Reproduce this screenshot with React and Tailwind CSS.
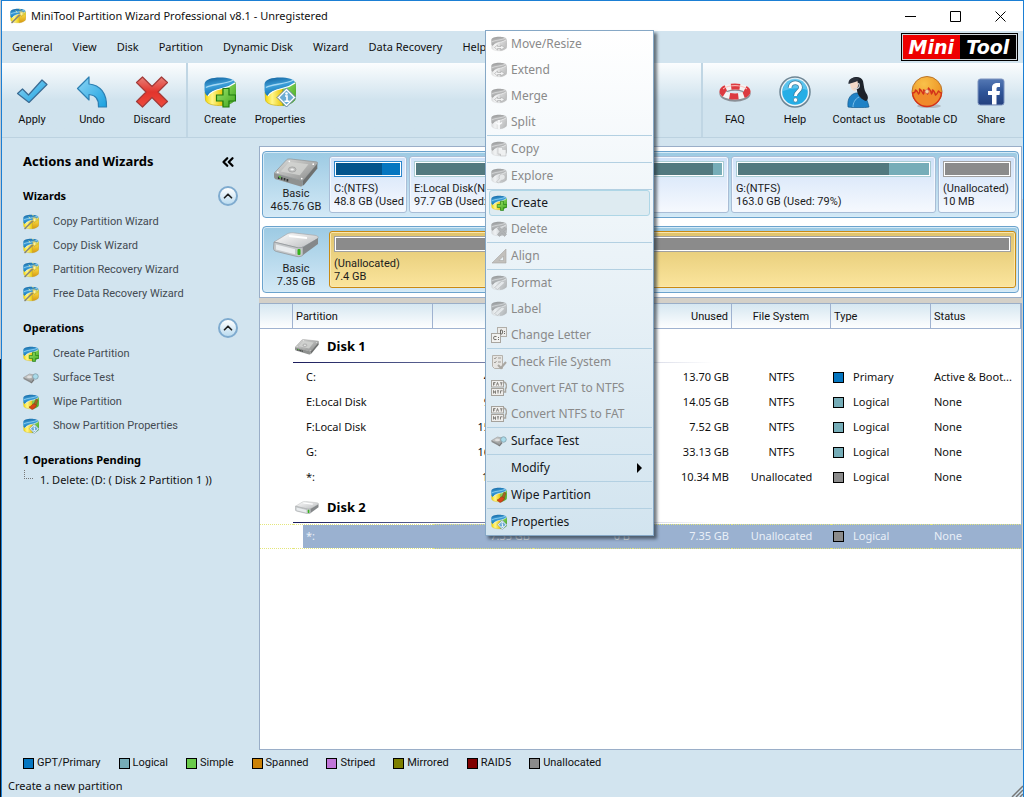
import React, { useState } from 'react';
import { ChevronUp, ChevronsLeft } from 'lucide-react';

const menuBar = ['General', 'View', 'Disk', 'Partition', 'Dynamic Disk', 'Wizard', 'Data Recovery', 'Help'];

const legend = [
  { label: 'GPT/Primary', color: 'bg-[#0576c0]' },
  { label: 'Logical', color: 'bg-[#76adb8]' },
  { label: 'Simple', color: 'bg-[#6acb4b]' },
  { label: 'Spanned', color: 'bg-[#cc8206]' },
  { label: 'Striped', color: 'bg-[#c075d8]' },
  { label: 'Mirrored', color: 'bg-[#7c7f00]' },
  { label: 'RAID5', color: 'bg-[#800000]' },
  { label: 'Unallocated', color: 'bg-[#8b8b8b]' },
];

const diskOneRows = [
  { name: 'C:', capacity: '48.83 GB', used: '35.13 GB', unused: '13.70 GB', fs: 'NTFS', type: 'Primary', color: 'bg-[#0576c0]', status: 'Active & Boot...' },
  { name: 'E:Local Disk', capacity: '97.66 GB', used: '83.61 GB', unused: '14.05 GB', fs: 'NTFS', type: 'Logical', color: 'bg-[#76adb8]', status: 'None' },
  { name: 'F:Local Disk', capacity: '156.25 GB', used: '148.73 GB', unused: '7.52 GB', fs: 'NTFS', type: 'Logical', color: 'bg-[#76adb8]', status: 'None' },
  { name: 'G:', capacity: '163.01 GB', used: '129.88 GB', unused: '33.13 GB', fs: 'NTFS', type: 'Logical', color: 'bg-[#76adb8]', status: 'None' },
  { name: '*:', capacity: '10.34 MB', used: '0 B', unused: '10.34 MB', fs: 'Unallocated', type: 'Logical', color: 'bg-[#8b8b8b]', status: 'None' },
];

const contextMenu = [
  [
    { label: 'Move/Resize', icon: 'resize', disabled: true },
    { label: 'Extend', icon: 'resize', disabled: true },
    { label: 'Merge', icon: 'resize', disabled: true },
    { label: 'Split', icon: 'split', disabled: true },
  ],
  [{ label: 'Copy', icon: 'copy', disabled: true }],
  [{ label: 'Explore', icon: 'explore', disabled: true }],
  [
    { label: 'Create', icon: 'plus', active: true },
    { label: 'Delete', icon: 'cross', disabled: true },
  ],
  [{ label: 'Align', icon: 'align', disabled: true }],
  [
    { label: 'Format', icon: 'format', disabled: true },
    { label: 'Label', icon: 'label', disabled: true },
    { label: 'Change Letter', icon: 'letter', disabled: true },
  ],
  [
    { label: 'Check File System', icon: 'check', disabled: true },
    { label: 'Convert FAT to NTFS', icon: 'convert', disabled: true },
    { label: 'Convert NTFS to FAT', icon: 'convert', disabled: true },
  ],
  [{ label: 'Surface Test', icon: 'surface' }],
  [{ label: 'Modify', submenu: true }],
  [{ label: 'Wipe Partition', icon: 'wipe' }],
  [{ label: 'Properties', icon: 'info' }],
];

// gradients shared by every icon on the page
const IconDefs = () => (
  <svg width="0" height="0" className="absolute" aria-hidden="true">
    <defs>
      <linearGradient id="gBlue" x1="0" y1="0" x2="0.3" y2="1">
        <stop offset="0" stopColor="#0f5f9c" />
        <stop offset="0.5" stopColor="#3d9fd8" />
        <stop offset="1" stopColor="#0b6fb5" />
      </linearGradient>
      <linearGradient id="gYellow" x1="0" y1="0" x2="1" y2="0">
        <stop offset="0" stopColor="#f3d500" />
        <stop offset="0.4" stopColor="#fff68a" />
        <stop offset="1" stopColor="#e8c400" />
      </linearGradient>
      <linearGradient id="gGold" x1="0" y1="0" x2="0" y2="1">
        <stop offset="0" stopColor="#b9cf3c" />
        <stop offset="0.4" stopColor="#f3cf3a" />
        <stop offset="1" stopColor="#d79a10" />
      </linearGradient>
      <linearGradient id="gGreen" x1="0" y1="0" x2="1" y2="1">
        <stop offset="0" stopColor="#9be36a" />
        <stop offset="1" stopColor="#3fa51c" />
      </linearGradient>
      <linearGradient id="gSky" x1="0" y1="0" x2="1" y2="1">
        <stop offset="0" stopColor="#8fd6f5" />
        <stop offset="1" stopColor="#18a0df" />
      </linearGradient>
      <linearGradient id="gRed" x1="0" y1="0" x2="0" y2="1">
        <stop offset="0" stopColor="#e88078" />
        <stop offset="0.5" stopColor="#e2342c" />
        <stop offset="1" stopColor="#ee4a3c" />
      </linearGradient>
      <linearGradient id="gMetal" x1="0" y1="0" x2="1" y2="1">
        <stop offset="0" stopColor="#dcdcda" />
        <stop offset="0.5" stopColor="#b4b5b4" />
        <stop offset="1" stopColor="#8b8c8b" />
      </linearGradient>
      <linearGradient id="gSilver" x1="0" y1="0" x2="1" y2="1">
        <stop offset="0" stopColor="#ffffff" />
        <stop offset="1" stopColor="#b9bbbd" />
      </linearGradient>
      <radialGradient id="gFire" cx="0.4" cy="0.25" r="0.8">
        <stop offset="0" stopColor="#f9c14a" />
        <stop offset="1" stopColor="#ea8a1c" />
      </radialGradient>
      <linearGradient id="gFb" x1="0" y1="0" x2="0" y2="1">
        <stop offset="0" stopColor="#5478b4" />
        <stop offset="0.5" stopColor="#2f5598" />
        <stop offset="1" stopColor="#24407e" />
      </linearGradient>
    </defs>
  </svg>
);

const Badge = ({ kind }) => {
  if (kind === 'plus') {
    return <path d="M19 12.500h6v6.500h6.500v6H25V31h-6v-6h-6.500v-6H19z" fill="url(#gGreen)" stroke="#1f7a10" strokeWidth="1.200" />;
  }
  if (kind === 'cross') {
    return <path d="M13 15l4-3 5 5 5-5 4 4-5 5 5 6-4 4-5-6-5 6-4-4 5-6z" fill="#8a8a8a" stroke="#666" />;
  }
  if (kind === 'info') {
    return (
      <g>
        <path d="M22.500 12L32 21.500 22.500 31 13 21.500z" fill="#fff" stroke="#5b7f9b" strokeWidth="1" />
        <path d="M22.500 14.500L29.500 21.500 22.500 28.500 15.500 21.500z" fill="#6dacd4" />
        <path d="M21 20h2v5M20.500 25.300h5" stroke="#fff" strokeWidth="1.600" fill="none" />
        <circle cx="22.500" cy="17.500" r="1.300" fill="#fff" />
      </g>
    );
  }
  if (kind === 'wizard') {
    return (
      <g strokeLinecap="round">
        <path d="M4 29L23 10" stroke="#5d5a45" strokeWidth="3" />
        <path d="M4 29L23 10" stroke="#e8e8e8" strokeWidth="1.200" />
        <path d="M22 5l1.500 3.500 4-1-2 3.500 3 3-4-.5-1.500 4-1.500-4-4 .5 3-3-2-3.500 3 1z" fill="#fff6a0" stroke="#a58a10" strokeWidth="0.600" />
        <path d="M14 9l-2-3M20 3l-1-2" stroke="#fff9a0" strokeWidth="1.500" />
      </g>
    );
  }
  if (kind === 'wipe') {
    return (
      <g>
        <path d="M12 26c4-1 6-5 10-7l5 4c-2 4-5 7-9 8z" fill="#d8451a" stroke="#8c2508" />
        <path d="M22 19l4-9 4 2-3 10z" fill="#a46324" stroke="#6e3b10" strokeWidth="0.700" />
      </g>
    );
  }
  if (kind === 'copy') {
    return <path d="M14 13h9v4h7v13H19v-4h-5z" fill="#ececec" stroke="#888" />;
  }
  if (kind === 'explore') {
    return <path d="M11 28l6-7a6 6 0 1 1 4 3l-6 6z" fill="#ddd" stroke="#888" />;
  }
  if (kind === 'resize') {
    return <path d="M7 23l6-5v3h7v-3l7 5-7 5v-3h-7v3z" fill="#eee" stroke="#777" strokeWidth="1.300" />;
  }
  if (kind === 'split') {
    return <path d="M16 12v18M10 17l6 4 6-4" stroke="#fff" strokeWidth="3" fill="none" />;
  }
  if (kind === 'format' || kind === 'label') {
    return <path d="M7 25L22 12l6 3-15 14z" fill="#e2e2e2" stroke="#888" />;
  }
  return null;
};

// three-part partition disc: blue lid, yellow front, green side
const PartitionIcon = ({ size = 16, badge, className = '' }) => (
  <svg width={size} height={size} viewBox="0 0 32 32" className={className} aria-hidden="true">
    <path d="M1 16C6 12 12 11 19 10v19.500C10 30 2 28 1.500 24z" fill="url(#gYellow)" stroke="#c9a900" strokeWidth="0.600" />
    <path
      d="M19 10.500c5-1 9-3 12-4.500 1.300 4 1.300 14 0 18-2 3-7 5-12 5.500z"
      fill={badge === 'wizard' ? 'url(#gGold)' : 'url(#gGreen)'}
      stroke={badge === 'wizard' ? '#b98a10' : '#4a9a2a'}
      strokeWidth="0.600"
    />
    <path d="M0.500 8C1 3.500 8 1.500 16 1.500s14.500 1.500 15 5.500c-4 3-8 4.500-13 5.500C11 14 6 16 4 20 1.500 19.500.5 16 .5 13z" fill="url(#gBlue)" />
    <path d="M2 11.500C8 8 21 8.500 29.500 4" fill="none" stroke="#a4d8f4" strokeWidth="1.400" />
    <path d="M4 20C6 16 11 14 18 12.500c5-1 9-2.500 13-5.500" fill="none" stroke="#fff" strokeWidth="1.200" />
    <Badge kind={badge} />
  </svg>
);

const SurfaceIcon = ({ size = 16 }) => (
  <svg width={size} height={size} viewBox="0 0 32 32" aria-hidden="true">
    <path d="M1 15L13 8l15 3-12 11z" fill="url(#gMetal)" stroke="#8c8c8c" />
    <path d="M1 15l15 7v4L1 18z" fill="#8a8c8c" />
    <ellipse cx="13" cy="14" rx="5" ry="2.500" fill="#dedede" />
    <path d="M16 26l6-7" stroke="#777" strokeWidth="3" />
    <circle cx="25" cy="13" r="5.500" fill="#a9dbea" stroke="#7f9aa6" strokeWidth="1.500" />
  </svg>
);

const AlignIcon = () => (
  <svg width="16" height="16" viewBox="0 0 16 16" aria-hidden="true">
    <path d="M1 15L15 1v14zM8 12.500h4.500V8z" fill="#c2c0bc" stroke="#a8a6a2" strokeWidth="0.600" fillRule="evenodd" />
  </svg>
);

const LetterIcon = () => (
  <svg width="16" height="16" viewBox="0 0 16 16" aria-hidden="true">
    <rect x="6.500" y="0.500" width="9" height="9" fill="#ececea" stroke="#b1aea8" />
    <rect x="0.500" y="6.500" width="9" height="9" fill="#f2f2f0" stroke="#a9a6a0" />
    <path d="M9.500 3v4h1.500q1.500-2 0-4zM13.500 4v1M13.500 6v1M5.500 9.500q-3-1-3 1.500t3 1.500M7.500 10v1M7.500 12v1" fill="none" stroke="#6f6c67" />
  </svg>
);

const CheckIcon = () => (
  <svg width="16" height="16" viewBox="0 0 16 16" aria-hidden="true">
    <path d="M1.500 1.500h10v13h-8l-2-2z" fill="#e6e5e2" stroke="#b5b2ac" />
    <path d="M3 4l1 1 1.500-2M7 4h3M3 8l1 1 1.500-2M7 8h3" fill="none" stroke="#a09d97" />
    <path d="M7 11l3 3 5-6" fill="none" stroke="#aaa7a1" strokeWidth="2" />
  </svg>
);

const ConvertIcon = () => (
  <svg width="16" height="16" viewBox="0 0 16 16" aria-hidden="true">
    <rect x="0.500" y="0.500" width="12" height="6.500" fill="#efeeec" stroke="#a5a29c" />
    <rect x="0.500" y="8.500" width="12" height="7" fill="#efeeec" stroke="#a5a29c" />
    <path d="M2.500 5.500v-3h2M2.500 4h1.500M5.500 5.500l1-3 1 3M9 2.800h2.500M10.300 2.800v2.700M2.500 13.500v-3l2 3v-3M6 10.800h2M7 10.800v2.700M9.500 13.500v-2.700h2" fill="none" stroke="#77746f" strokeWidth="0.900" />
    <path d="M13 2c3 1 3 5 1.500 7v3h-2" fill="none" stroke="#aaa7a1" strokeWidth="1.500" />
  </svg>
);

const HardDrive = ({ className = '' }) => (
  <svg viewBox="0 0 46 30" className={className} aria-hidden="true">
    <path d="M0 16L13 2c1-1 2-1 4-1l27 3c2 .3 2 1.300 1 2.500L30 24z" fill="url(#gMetal)" stroke="#8f9090" strokeWidth="0.700" />
    <path d="M0 16l30 8v4.500c0 1-1 1.500-3 1L3 22.500C1 22 0 21 0 19.500z" fill="#8f9190" />
    <path d="M30 24L45.300 6v5L31.500 28c-1 1-1.500 1-1.500 0z" fill="#6e706f" />
    <path d="M7 14L16 4l20 2.500L27 18z" fill="#d3d4d2" opacity="0.800" />
    <ellipse cx="19" cy="12" rx="4" ry="2.700" fill="#bfc0bf" stroke="#9a9b9a" strokeWidth="0.700" />
    <ellipse cx="19" cy="12" rx="1.800" ry="1.100" fill="#f2f2f2" />
    <path d="M5 19.500v2.500M8 20.200v2.500M11 21v2.500M14 22v2.500" stroke="#2f3331" strokeWidth="1.800" />
    <path d="M5 18.500l2 .6v2l-2-.6z" fill="#57c53b" />
    <circle cx="16" cy="3.500" r="0.900" fill="#fff" />
    <circle cx="41" cy="6.500" r="0.900" fill="#fff" />
    <circle cx="4" cy="15" r="0.900" fill="#fff" />
    <circle cx="29" cy="21.500" r="0.900" fill="#fff" />
  </svg>
);

const RemovableDrive = ({ className = '' }) => (
  <svg viewBox="0 0 46 26" className={className} aria-hidden="true">
    <path d="M1 10L14 2c2-1 4-1.300 6-1.200l22 2.500c3 .5 4 2 2.500 3.500L30 15c-2 1-4 1-6 .6z" fill="url(#gSilver)" stroke="#a6a8aa" strokeWidth="0.700" />
    <path d="M1 10l23 5.600c2 .4 4 .4 6-.6v8c-1.500 1.500-4 2-6 1.500L3.500 19.500C1.500 19 .5 18 .5 16z" fill="#c5c8ca" stroke="#8e9193" strokeWidth="0.700" />
    <path d="M30 15L45 6v6L30 23z" fill="#85888a" />
    <path d="M3 12.500l19 4.800v5L3 17.500z" fill="#e9ecee" />
    <path d="M16 4l18 2" stroke="#fff" strokeWidth="2" />
    <rect x="24.500" y="17" width="3" height="6" rx="1" fill="#35b21a" />
  </svg>
);

const ApplyIcon = () => (
  <svg width="32" height="32" viewBox="0 0 32 32" aria-hidden="true">
    <path d="M1.500 17.500L6.500 13l6 6L26 4l5 4.500-18 18z" fill="url(#gSky)" stroke="#3a6b93" strokeWidth="1.200" strokeLinejoin="round" />
  </svg>
);

const UndoIcon = () => (
  <svg width="32" height="32" viewBox="0 0 32 32" aria-hidden="true">
    <path d="M1.500 12.500L13 1v7c11 1 18 9 17.500 23H22.500c.5-8-3-12-9.500-12.500V24z" fill="url(#gSky)" stroke="#2c7fb2" strokeWidth="1.200" strokeLinejoin="round" />
  </svg>
);

const DiscardIcon = () => (
  <svg width="34" height="32" viewBox="0 0 34 32" aria-hidden="true">
    <path d="M7.500 1L17 10.500 26.500 1 32.500 6.500 23 16l9.500 9.500-6 5.500L17 21.500 7.500 31l-6-5.500L11 16 1.500 6.500z" fill="url(#gRed)" stroke="#a23a38" strokeWidth="1.200" strokeLinejoin="round" />
  </svg>
);

const LifebuoyIcon = () => (
  <svg width="32" height="32" viewBox="0 0 32 32" aria-hidden="true">
    <ellipse cx="16" cy="17" rx="12.500" ry="5.500" fill="none" stroke="#8a8f96" strokeWidth="6.500" />
    <ellipse cx="16" cy="15.500" rx="12.500" ry="5" fill="none" stroke="#f3f3f3" strokeWidth="6" />
    <ellipse cx="16" cy="15.500" rx="12.500" ry="5" fill="none" stroke="#dc3a40" strokeWidth="6" strokeDasharray="8.500 5.500" strokeDashoffset="3" />
    <path d="M4 13c5-4.500 19-4.500 24 0" fill="none" stroke="#ffc4c0" strokeWidth="1" />
  </svg>
);

const HelpIcon = () => (
  <svg width="32" height="32" viewBox="0 0 32 32" aria-hidden="true">
    <circle cx="16" cy="16" r="15" fill="#eef5f9" stroke="#6d8594" strokeWidth="1.500" />
    <circle cx="16" cy="16" r="12.800" fill="#25aee6" />
    <path d="M4 15a12 12 0 0 1 24-1c-8-3-16-2-24 1z" fill="#7fd0f2" opacity="0.600" />
    <path d="M11 12c0-7 10.500-7 10.500-.5 0 4-5 4-5 8.500" fill="none" stroke="#3f7c9c" strokeWidth="4.500" />
    <path d="M11 12c0-7 10.500-7 10.500-.5 0 4-5 4-5 8.500" fill="none" stroke="#fff" strokeWidth="3" />
    <circle cx="16.500" cy="24" r="2.200" fill="#fff" stroke="#3f7c9c" strokeWidth="0.700" />
  </svg>
);

const ContactIcon = () => (
  <svg width="32" height="32" viewBox="0 0 32 32" aria-hidden="true">
    <path d="M5 31c-1-9 3-13 8-14 8-1 11 5 13 14-5 1-15 1-21 0z" fill="#1f82c6" stroke="#14598c" strokeWidth="0.700" />
    <path d="M10 31c0-4 2-8 6-10" fill="none" stroke="#7cc0ea" />
    <path d="M7 6C8 0 18-1 20 5c1 5 1 9 3 12 3 4 2 7 0 8-4-1-9-6-9-11z" fill="#1d222a" />
    <path d="M7 6c3 0 6-1 7-2 2 5 1 9-2 11-3-.5-5-3-5-9z" fill="#f3d9c8" />
    <path d="M5.500 8C5 2 12 0 16 3c-1 3-6 3.500-10.500 5z" fill="#2a2f38" />
    <path d="M15.500 7c2 4 0 6.500-5 5.500" fill="none" stroke="#cfd4d9" strokeWidth="1.200" />
  </svg>
);

const CdIcon = () => (
  <svg width="32" height="32" viewBox="0 0 32 32" aria-hidden="true">
    <ellipse cx="18" cy="30" rx="12" ry="2" fill="#9c9ca0" opacity="0.600" />
    <circle cx="16" cy="15.500" r="15" fill="url(#gFire)" stroke="#b9742a" strokeWidth="1" />
    <path
      d="M1.500 17c2 0 3-1 3-3 2 1 2 2 3 4 2-1 1-3 1-5 2 1 2.500 3 4 5 1-1 .5-2 0-4 3 1 3 2 4 4 1.500-2 0-4 1-6 2 2 3 4 3 6 1.500-1 1-3 1-4 2 1 2.500 3 3 5 2-1 2-3 3-4 1 1 1.500 2 3 2-1 8-7 13.500-14.500 13.500S2.500 25 1.500 17z"
      fill="#f08a2a"
      stroke="#d3321b"
      strokeWidth="1.400"
      strokeLinejoin="round"
    />
    <circle cx="16" cy="15.500" r="2" fill="#f6d7a0" stroke="#c66" strokeWidth="0.600" />
  </svg>
);

const FacebookIcon = () => (
  <svg width="32" height="32" viewBox="0 0 32 32" aria-hidden="true">
    <rect x="3" y="3" width="26" height="26" rx="2.500" fill="url(#gFb)" stroke="#7d93be" />
    <path d="M17 28.500V19h-4v-4h4v-3c0-4 2-5.500 8-5v4c-3-.2-3.500.3-3.500 2v2h3.500l-.5 4h-3v9.500z" fill="#fff" />
  </svg>
);

const ToolButton = ({ icon, label, wide }) => (
  <button type="button" className={`${wide ? 'w-[68px]' : 'w-[60px]'} flex flex-col items-center gap-1 pt-[13px] text-[11px] leading-4 text-[#111] whitespace-nowrap`}>
    <span className="flex h-8 items-center">{icon}</span>
    {label}
  </button>
);

const SideSection = ({ title, items }) => {
  const [open, setOpen] = useState(true);
  return (
    <section>
      <div className="flex h-6 items-center justify-between pr-[21px]">
        <h3 className="font-['Noto_Sans',sans-serif] text-[11px] font-bold text-black">{title}</h3>
        <button
          type="button"
          aria-label={`Toggle ${title}`}
          onClick={() => setOpen(!open)}
          className="flex size-5 items-center justify-center rounded-full border-2 border-[#7fabcf] bg-linear-to-b from-white to-[#bcdcf0] text-[#222]"
        >
          <ChevronUp size={14} strokeWidth={3} />
        </button>
      </div>
      {open && (
        <ul className="pt-[2px]">
          {items.map((item) => (
            <li key={item.label}>
              <a href="#" className="flex h-6 items-center gap-[14px] text-[11px] text-[#444b52]">
                {item.icon}
                {item.label}
              </a>
            </li>
          ))}
        </ul>
      )}
    </section>
  );
};

const UsageBar = ({ frame, fill, used, usedFill }) => (
  <div className={`h-4 border p-px ${frame}`}>
    <div className={`h-full ${fill}`}>
      <div className={`h-full ${usedFill}`} style={{ width: `${used}%` }} />
    </div>
  </div>
);

const PartitionBlock = ({ name, size, width, selected, ...bar }) => (
  <div
    className={`min-w-0 rounded-[3px] border px-1 pt-1 text-[11px] leading-[13px] whitespace-nowrap text-[#1c1c1c] ${width} ${
      selected
        ? 'border-[#c98a12] bg-linear-to-b from-[#e0c46c] to-[#fbe59d] shadow-[inset_0_0_0_1px_#fbe8b0]'
        : 'border-[#a9bdd6] bg-linear-to-b from-[#cfe1f8] to-[#f6f9fe] shadow-[inset_0_0_0_1px_#f4f8fe]'
    }`}
  >
    <UsageBar {...bar} />
    <div className="-mr-[3px] overflow-hidden pt-[5px]">
      <div>{name}</div>
      <div>{size}</div>
    </div>
  </div>
);

const DiskStrip = ({ icon, size, children }) => (
  <div className="flex h-[67px] rounded-[4px] border border-[#6ba3cd] bg-linear-to-b from-[#9ccae3] to-[#d3e9f6] py-1 pr-[2px] shadow-[inset_0_0_0_1px_#d7ebf7]">
    <div className="flex w-[66px] shrink-0 flex-col items-center justify-end text-[11px] leading-[13px] text-[#1c1c1c]">
      {icon}
      <span>Basic</span>
      <span>{size}</span>
    </div>
    <div className="flex min-w-0 flex-1 gap-[2px]">{children}</div>
  </div>
);

const logicalBar = { frame: 'border-[#a9cdd4] bg-white', fill: 'bg-[#76adb8]', usedFill: 'bg-[#52797f]' };
const emptyBar = { frame: 'border-[#a0a0a0] bg-white', fill: 'bg-[#8b8b8b]', usedFill: 'bg-[#8b8b8b]', used: 100 };

const DiskMap = () => (
  <div className="flex flex-col gap-2 border border-[#9aaec8] bg-white px-[2px] pt-1 pb-1">
    <DiskStrip icon={<HardDrive className="w-11" />} size="465.76 GB">
      <PartitionBlock name="C:(NTFS)" size="48.8 GB (Used" width="w-[78px] shrink-0" frame="border-[#2b86cb] bg-white" fill="bg-[#0576c0]" usedFill="bg-[#03548b]" used={72} />
      <PartitionBlock name="E:Local Disk(NTFS)" size="97.7 GB (Used: 85%)" width="flex-121" used={86} {...logicalBar} />
      <PartitionBlock name="F:Local Disk(NTFS)" size="156.2 GB (Used: 95%)" width="flex-195" used={95} {...logicalBar} />
      <PartitionBlock name="G:(NTFS)" size="163.0 GB (Used: 79%)" width="flex-207" used={79} {...logicalBar} />
      <PartitionBlock name="(Unallocated)" size="10 MB" width="w-[78px] shrink-0" {...emptyBar} />
    </DiskStrip>
    <DiskStrip icon={<RemovableDrive className="mb-1 w-[46px]" />} size="7.35 GB">
      <PartitionBlock name="(Unallocated)" size="7.4 GB" width="flex-1" selected {...emptyBar} />
    </DiskStrip>
  </div>
);

const DiskHeadingRow = ({ icon, name, height }) => (
  <tr>
    <td />
    <th colSpan={7} scope="rowgroup" className="p-0 text-left align-top">
      <div className={`flex items-center gap-2 pt-[3px] pl-[2px] text-[13px] font-bold text-black ${height}`}>
        {icon}
        {name}
      </div>
      <div className="h-px w-[420px] bg-linear-to-r from-[#1c1c5c] to-white" />
    </th>
  </tr>
);

const PartitionRow = ({ row, selected }) => {
  const edge = selected ? 'border-y border-dotted border-[#e4e67c]' : '';
  const cell = selected ? `${edge} bg-[#9ab1d0] text-[#e9eff7]` : 'text-[#111]';
  return (
    <tr className="h-[25px]">
      <td className={edge} />
      <td className={`${edge} pl-[10px] ${selected ? 'text-[#e9eff7]' : 'text-[#111]'}`}>
        <div className={`flex h-[23px] items-center pl-[3px] ${selected ? 'bg-[#9ab1d0]' : ''}`}>{row.name}</div>
      </td>
      <td className={`pr-[3px] text-right ${cell}`}>{row.capacity}</td>
      <td className={`pr-[3px] text-right ${cell}`}>{row.used}</td>
      <td className={`pr-[3px] text-right ${cell}`}>{row.unused}</td>
      <td className={`text-center ${cell}`}>{row.fs}</td>
      <td className={cell}>
        <div className="flex items-center gap-[9px] pl-[2px]">
          <span className={`size-[11px] border border-black ${row.color}`} />
          {row.type}
        </div>
      </td>
      <td className={`pl-[3px] ${cell}`}>{row.status}</td>
    </tr>
  );
};

const PartitionTable = () => {
  const th = 'border-r border-b border-[#9fb2d0] px-[3px] pt-[3px] font-normal text-[#111]';
  return (
    <div className="flex-1 border border-[#9aaec8] bg-white">
      <table className="w-full table-fixed border-separate border-spacing-0 font-['Noto_Sans','Open_Sans',sans-serif] text-[11px] whitespace-nowrap">
        <colgroup>
          <col className="w-[33px]" />
          <col className="w-[140px]" />
          <col className="w-[100px]" />
          <col className="w-[100px]" />
          <col className="w-[99px]" />
          <col className="w-[99px]" />
          <col className="w-[100px]" />
          <col />
        </colgroup>
        <thead className="font-['Roboto',sans-serif]">
          <tr className="h-[25px] bg-linear-to-b from-[#d6e7f1] to-white">
            <th className={th} />
            <th className={`${th} text-left`}>Partition</th>
            <th className={`${th} text-right`}>Capacity</th>
            <th className={`${th} text-right`}>Used</th>
            <th className={`${th} text-right`}>Unused</th>
            <th className={`${th} text-center`}>File System</th>
            <th className={`${th} text-left`}>Type</th>
            <th className={`${th} text-left`}>Status</th>
          </tr>
        </thead>
        <tbody>
          <DiskHeadingRow icon={<HardDrive className="w-6" />} name="Disk 1" height="h-[33px]" />
          <tr className="h-[2px]"><td colSpan={8} /></tr>
          {diskOneRows.map((row) => (
            <PartitionRow key={row.name} row={row} />
          ))}
          <DiskHeadingRow icon={<RemovableDrive className="w-6" />} name="Disk 2" height="h-8" />
          <tr className="h-px"><td colSpan={8} /></tr>
          <PartitionRow
            selected
            row={{ name: '*:', capacity: '7.35 GB', used: '0 B', unused: '7.35 GB', fs: 'Unallocated', type: 'Logical', color: 'bg-[#8b8b8b]', status: 'None' }}
          />
        </tbody>
      </table>
    </div>
  );
};

const MenuIcon = ({ icon, disabled }) => {
  if (!icon) return <span className="size-4" />;
  if (icon === 'surface') return <SurfaceIcon />;
  if (icon === 'align') return <AlignIcon />;
  if (icon === 'letter') return <LetterIcon />;
  if (icon === 'check') return <CheckIcon />;
  if (icon === 'convert') return <ConvertIcon />;
  return <PartitionIcon badge={icon} className={disabled ? 'opacity-60 grayscale' : ''} />;
};

const ContextMenu = () => (
  <div
    role="menu"
    className="absolute top-[30px] left-[485px] w-[169px] border border-[#86a8c6] bg-linear-to-b from-white to-[#d2e4ef] px-px font-['Noto_Sans','Open_Sans',sans-serif] shadow-[3px_3px_3px_rgba(40,50,60,0.65)]"
  >
    {contextMenu.map((group, index) => (
      <div key={group[0].label} className={`px-[2px] ${index > 0 ? 'border-t border-[#b3d0e2]' : ''}`}>
        {group.map((item) => (
          <button
            key={item.label}
            type="button"
            role="menuitem"
            disabled={item.disabled}
            className={`flex h-[26px] w-full items-center gap-1 rounded-[3px] border px-px text-left text-[12px] ${
              item.active ? 'border-[#aed6e6] bg-[#deebf1]' : 'border-transparent'
            } ${item.disabled ? 'text-[#8a8a8a]' : 'text-[#15181c]'}`}
          >
            <MenuIcon icon={item.icon} disabled={item.disabled} />
            {item.label}
            {item.submenu && <span className="mr-[6px] ml-auto border-y-[5px] border-l-[5px] border-y-transparent border-l-black" />}
          </button>
        ))}
      </div>
    ))}
  </div>
);

const App = () => (
  <div className="min-h-screen bg-linear-to-b from-[#c4c9cf] from-45% to-[#0b0d14] to-45% pl-px font-['Roboto','Open_Sans',sans-serif]">
    <IconDefs />
    <div className="flex min-h-screen flex-col border-x border-t border-[#1b7fd4] bg-[#d2e4ef]">
      <header className="flex h-[30px] items-center bg-white pl-2 text-[#111]">
        <PartitionIcon badge="wizard" />
        <h1 className="ml-[5px] font-['Noto_Sans',sans-serif] text-[11px]">MiniTool Partition Wizard Professional v8.1 - Unregistered</h1>
        <div className="ml-auto flex">
          <button type="button" aria-label="Minimize" className="flex w-[45px] justify-center">
            <svg width="11" height="11" viewBox="0 0 11 11"><path d="M0 5.500h11" stroke="#000" /></svg>
          </button>
          <button type="button" aria-label="Maximize" className="flex w-[45px] justify-center">
            <svg width="11" height="11" viewBox="0 0 11 11"><path d="M.5.5h10v10H.5z" stroke="#000" fill="none" /></svg>
          </button>
          <button type="button" aria-label="Close" className="flex w-[45px] justify-center">
            <svg width="11" height="11" viewBox="0 0 11 11"><path d="M.5.5l10 10M10.500.5l-10 10" stroke="#000" /></svg>
          </button>
        </div>
      </header>

      <nav className="flex h-8 items-center gap-5 pr-[5px] pl-[10px] font-['Noto_Sans',sans-serif] text-[11px] text-[#111]">
        {menuBar.map((item) => (
          <button key={item} type="button">{item}</button>
        ))}
        <div className="ml-auto flex h-7 w-[117px] border border-black bg-[#cfd6da] p-px font-['DejaVu_Sans',sans-serif] text-[19px] font-bold text-white italic">
          <span className="flex flex-1 items-center justify-center bg-[#ee0000]">Mini</span>
          <span className="flex flex-1 items-center justify-center bg-black">Tool</span>
        </div>
      </nav>

      <div className="flex h-[75px] justify-between border-b border-[#bcd2e0] bg-linear-to-b from-[#fbfdfe] to-[#d0e3ee] to-50%">
        <div className="flex">
          <div className="flex border-r-2 border-[#c0d6e4] pr-1">
            <ToolButton icon={<ApplyIcon />} label="Apply" />
            <ToolButton icon={<UndoIcon />} label="Undo" />
            <ToolButton icon={<DiscardIcon />} label="Discard" />
          </div>
          <div className="flex pl-[2px]">
            <ToolButton icon={<PartitionIcon size={32} badge="plus" />} label="Create" />
            <ToolButton icon={<PartitionIcon size={32} badge="info" />} label="Properties" />
          </div>
        </div>
        <div className="flex border-l-2 border-[#c0d6e4] px-[2px]">
          <ToolButton icon={<LifebuoyIcon />} label="FAQ" />
          <ToolButton icon={<HelpIcon />} label="Help" />
          <ToolButton icon={<ContactIcon />} label="Contact us" wide />
          <ToolButton icon={<CdIcon />} label="Bootable CD" wide />
          <ToolButton icon={<FacebookIcon />} label="Share" />
        </div>
      </div>

      <div className="flex flex-1">
        <aside className="w-[257px] shrink-0 pt-3 pl-[21px]">
          <div className="flex h-6 items-center justify-between pr-[22px]">
            <h2 className="font-['Noto_Sans',sans-serif] text-[13px] font-bold text-black">Actions and Wizards</h2>
            <button type="button" aria-label="Collapse panel">
              <ChevronsLeft size={18} strokeWidth={3} />
            </button>
          </div>
          <div className="pt-[10px]">
            <SideSection
              title="Wizards"
              items={[
                { label: 'Copy Partition Wizard', icon: <PartitionIcon badge="wizard" /> },
                { label: 'Copy Disk Wizard', icon: <PartitionIcon badge="wizard" /> },
                { label: 'Partition Recovery Wizard', icon: <PartitionIcon badge="wizard" /> },
                { label: 'Free Data Recovery Wizard', icon: <PartitionIcon badge="wizard" /> },
              ]}
            />
          </div>
          <div className="pt-[10px]">
            <SideSection
              title="Operations"
              items={[
                { label: 'Create Partition', icon: <PartitionIcon badge="plus" /> },
                { label: 'Surface Test', icon: <SurfaceIcon /> },
                { label: 'Wipe Partition', icon: <PartitionIcon badge="wipe" /> },
                { label: 'Show Partition Properties', icon: <PartitionIcon badge="info" /> },
              ]}
            />
          </div>
          <div className="pt-3 font-['Noto_Sans',sans-serif] text-[11px] leading-5">
            <h3 className="font-bold text-black">1 Operations Pending</h3>
            <div className="flex text-[#111]">
              <span className="mr-[7px] ml-px h-[9px] w-[9px] border-b border-l border-dotted border-[#777]" />
              1. Delete: (D: ( Disk 2 Partition 1 ))
            </div>
          </div>
        </aside>

        <main className="flex min-w-0 flex-1 flex-col gap-[5px] bg-linear-to-b from-[#d2e4ef] from-10% to-[#d4d0c8] to-10% pr-px">
          <div className="bg-[#d2e4ef] pt-2">
            <DiskMap />
          </div>
          <PartitionTable />
        </main>
      </div>

      <footer>
        <ul className="flex h-[26px] items-center gap-[18px] pt-px pl-[21px] text-[11px] text-[#111]">
          {legend.map((item) => (
            <li key={item.label} className="flex items-center gap-[3px]">
              <span className={`size-[11px] border border-black ${item.color}`} />
              {item.label}
            </li>
          ))}
        </ul>
        <div className="flex h-[21px] items-center justify-between pl-[6px] font-['Noto_Sans',sans-serif] text-[11px] text-[#111]">
          <span>Create a new partition</span>
          <svg width="12" height="12" viewBox="0 0 12 12" className="self-end" aria-hidden="true">
            <path d="M1 12L12 1M5 12l7-7M9 12l3-3" stroke="#777" strokeWidth="1.500" />
          </svg>
        </div>
      </footer>
    </div>
    <ContextMenu />
  </div>
);

export default App;
